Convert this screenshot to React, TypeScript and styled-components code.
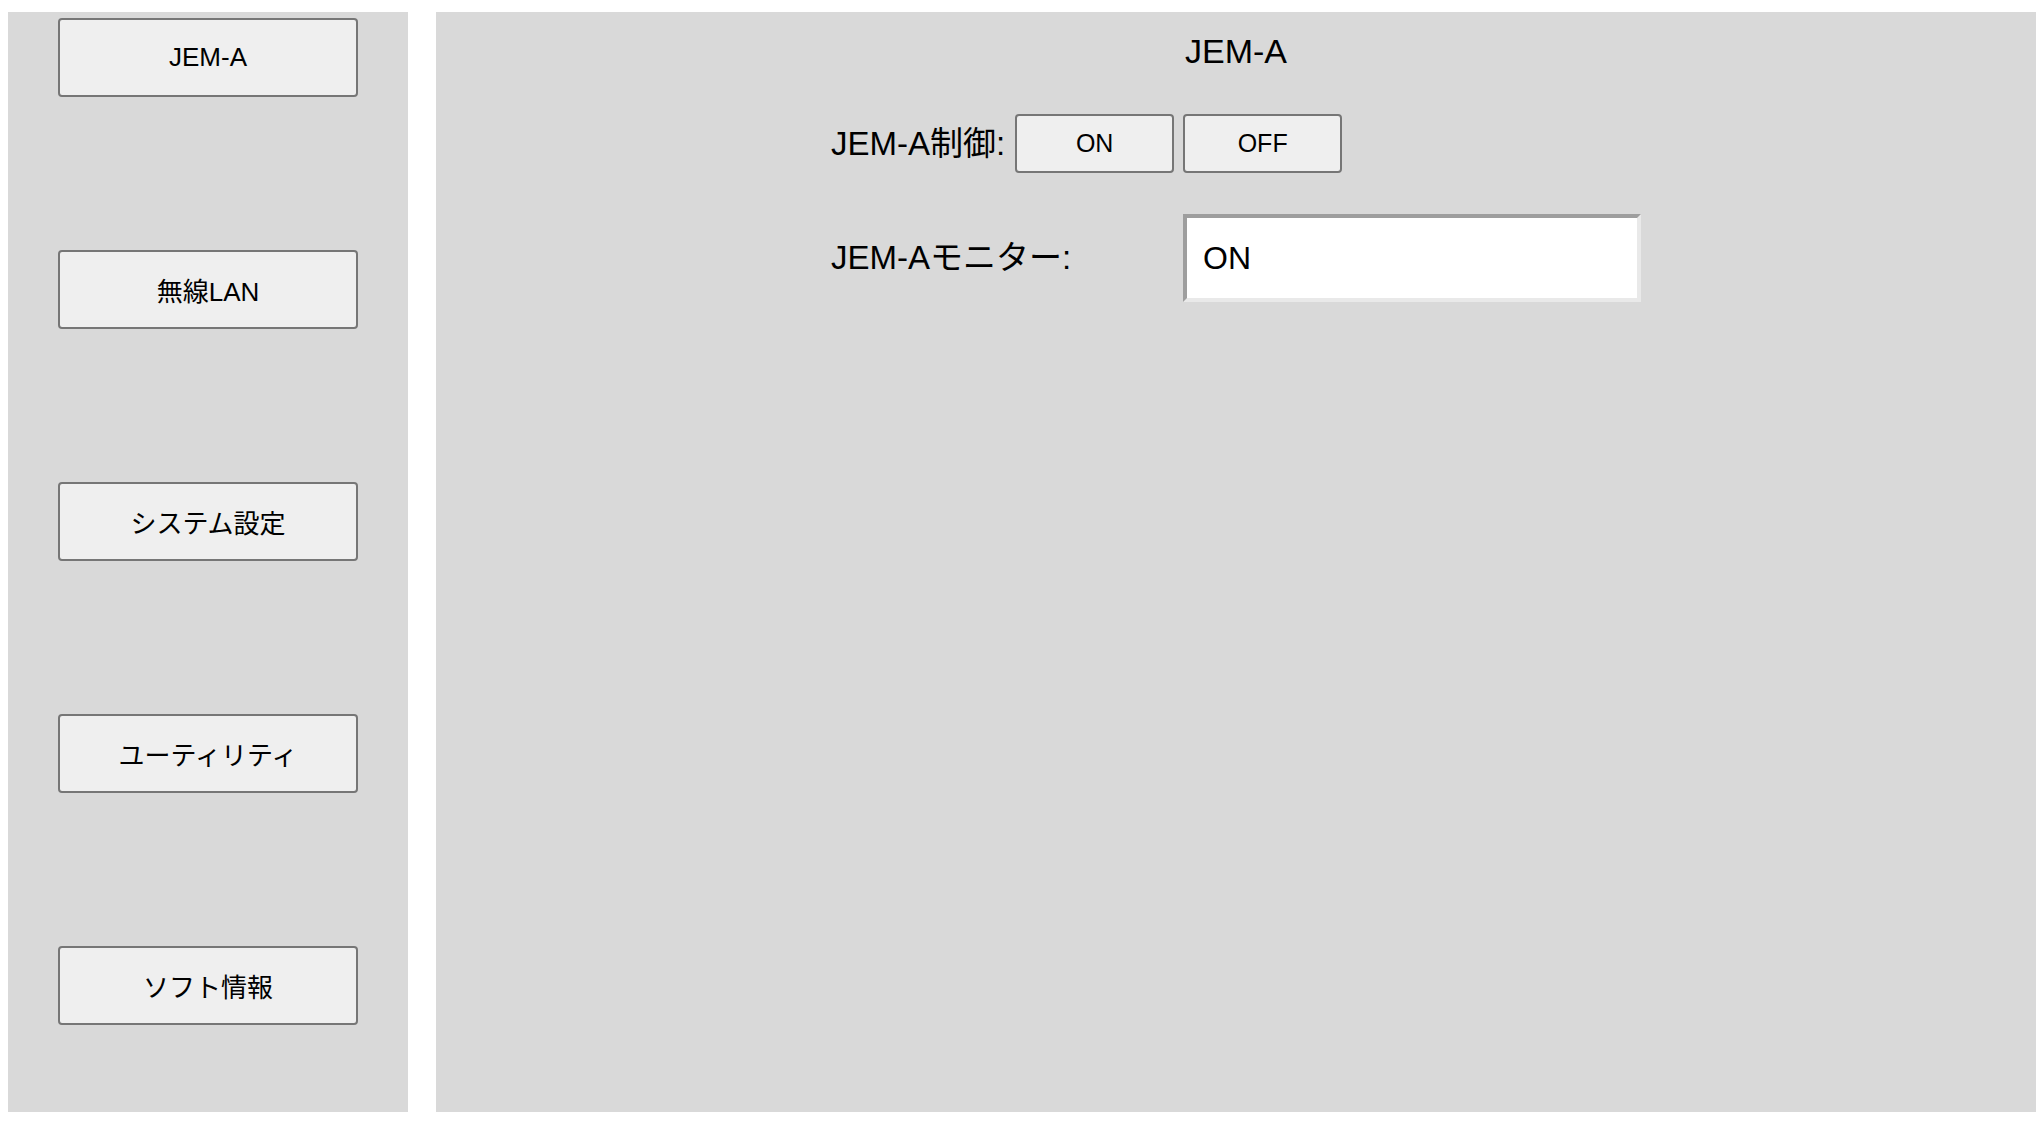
import React, { useState } from 'react';
import styled, { createGlobalStyle } from 'styled-components';

const GlobalStyle = createGlobalStyle`
  body {
    margin: 0;
    font-family: "Liberation Sans", "Noto Sans CJK JP", sans-serif;
    color: #000;
    background: #fff;
  }
`;

const Page = styled.div`
  display: flex;
  gap: 28px;
  padding: 12px 0 0 8px;
`;

const Sidebar = styled.nav`
  width: 400px;
  height: 1100px;
  background: #d9d9d9;
  display: flex;
  flex-direction: column;
  align-items: center;
  gap: 153px;
  padding-top: 6px;
  box-sizing: border-box;
`;

const MenuButton = styled.button`
  width: 300px;
  height: 79px;
  background: #efefef;
  border: 2px solid #767676;
  border-radius: 4px;
  font-family: inherit;
  font-size: 26px;
  color: #000;
  cursor: pointer;
`;

const Main = styled.main`
  width: 1600px;
  height: 1100px;
  background: #d9d9d9;
  display: flex;
  flex-direction: column;
  align-items: center;
  padding-top: 19px;
  box-sizing: border-box;
`;

const Title = styled.div`
  font-size: 34px;
  line-height: 40px;
`;

const Form = styled.div`
  width: 810px;
  display: flex;
  flex-direction: column;
  margin-top: 43px;
  gap: 41px;
`;

const Row = styled.div`
  display: flex;
  align-items: center;
`;

const Label = styled.span<{ $width?: number }>`
  font-size: 33px;
  line-height: 40px;
  ${(p) => (p.$width ? `width: ${p.$width}px;` : 'margin-right: 10px;')}
  flex-shrink: 0;
`;

const ToggleButton = styled.button`
  width: 159px;
  height: 59px;
  background: #efefef;
  border: 2px solid #767676;
  border-radius: 4px;
  font-family: inherit;
  font-size: 25px;
  color: #000;
  cursor: pointer;
  & + & {
    margin-left: 9px;
  }
`;

const Monitor = styled.input`
  width: 458px;
  height: 88px;
  box-sizing: border-box;
  border: 4px solid;
  border-color: #9e9e9e #e9e9e9 #e9e9e9 #9e9e9e;
  background: #fff;
  font-family: inherit;
  font-size: 32px;
  padding: 0 0 0 16px;
  color: #000;
  outline: none;
`;

const menu = ['JEM-A', '無線LAN', 'システム設定', 'ユーティリティ', 'ソフト情報'];

export default function App() {
  const [state, setState] = useState('ON');
  return (
    <>
      <GlobalStyle />
      <Page>
        <Sidebar>
          {menu.map((m) => (
            <MenuButton key={m}>{m}</MenuButton>
          ))}
        </Sidebar>
        <Main>
          <Title>JEM-A</Title>
          <Form>
            <Row>
              <Label>JEM-A制御:</Label>
              <ToggleButton onClick={() => setState('ON')}>ON</ToggleButton>
              <ToggleButton onClick={() => setState('OFF')}>OFF</ToggleButton>
            </Row>
            <Row>
              <Label $width={352}>JEM-Aモニター:</Label>
              <Monitor type="text" value={state} readOnly />
            </Row>
          </Form>
        </Main>
      </Page>
    </>
  );
}
